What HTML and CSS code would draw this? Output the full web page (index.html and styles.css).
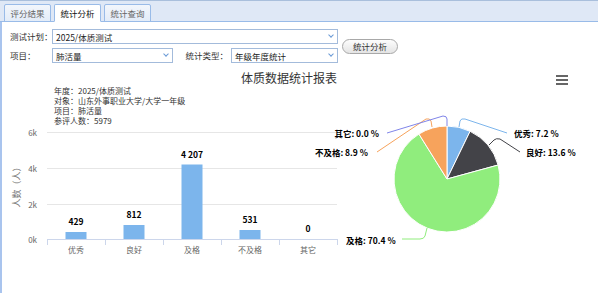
FILE: index.html
```html
<!DOCTYPE html>
<html lang="zh-CN">
<head>
  <meta charset="UTF-8">
  <title>统计分析</title>
  <link rel="stylesheet" href="styles.css">
</head>
<body>
  <div class="tabs">
    <div class="tab">评分结果</div>
    <div class="tab active">统计分析</div>
    <div class="tab">统计查询</div>
  </div>
  <div class="panel">
    <div class="form">
      <div class="label">测试计划：</div>
      <div class="select wide"><span>2025/体质测试</span><i class="arrow"></i></div>
      <button class="btn">统计分析</button>
      <div class="label">项目：</div>
      <div class="select"><span>肺活量</span><i class="arrow"></i></div>
      <div class="label right">统计类型：</div>
      <div class="select"><span>年级年度统计</span><i class="arrow"></i></div>
    </div>

    <svg class="chart" width="596" height="230" viewBox="2 63 596 230">
      <!-- title and menu -->
      <text class="title" x="289" y="83" text-anchor="middle">体质数据统计报表</text>
      <rect x="556" y="75" width="12" height="2" fill="#666"/>
      <rect x="556" y="79" width="12" height="2" fill="#666"/>
      <rect x="556" y="83" width="12" height="2" fill="#666"/>

      <!-- subtitle -->
      <text class="info" x="54" y="94">年度：2025/体质测试</text>
      <text class="info" x="54" y="104">对象：山东外事职业大学/大学一年级</text>
      <text class="info" x="54" y="114">项目：肺活量</text>
      <text class="info" x="54" y="124">参评人数：5979</text>

      <!-- bar chart -->
      <g stroke="#e6e6e6">
        <line x1="47" y1="132.5" x2="337" y2="132.5"/>
        <line x1="47" y1="168.5" x2="337" y2="168.5"/>
        <line x1="47" y1="204.5" x2="337" y2="204.5"/>
      </g>
      <g class="axis" text-anchor="end">
        <text x="37" y="135.5">6k</text>
        <text x="37" y="171.5">4k</text>
        <text x="37" y="207.5">2k</text>
        <text x="37" y="242.5">0k</text>
      </g>
      <text class="axis-title" transform="translate(20 185) rotate(-90)" text-anchor="middle">人数（人）</text>

      <g fill="#7cb5ec">
        <rect x="65.5" y="232" width="21" height="7.5"/>
        <rect x="123.5" y="225" width="21" height="14.5"/>
        <rect x="181.5" y="164.5" width="21" height="75"/>
        <rect x="239.5" y="230" width="21" height="9.5"/>
      </g>
      <g stroke="#ccd6eb">
        <line x1="47" y1="239.5" x2="338" y2="239.5"/>
        <line x1="47.5" y1="239.5" x2="47.5" y2="245"/>
        <line x1="105.5" y1="239.5" x2="105.5" y2="245"/>
        <line x1="163.5" y1="239.5" x2="163.5" y2="245"/>
        <line x1="221.5" y1="239.5" x2="221.5" y2="245"/>
        <line x1="279.5" y1="239.5" x2="279.5" y2="245"/>
        <line x1="337.5" y1="239.5" x2="337.5" y2="245"/>
      </g>
      <g class="value" text-anchor="middle">
        <text x="76" y="225">429</text>
        <text x="134" y="218">812</text>
        <text x="192" y="158">4 207</text>
        <text x="250" y="223">531</text>
        <text x="308" y="232">0</text>
      </g>
      <g class="axis" text-anchor="middle">
        <text x="76" y="253">优秀</text>
        <text x="134" y="253">良好</text>
        <text x="192" y="253">及格</text>
        <text x="250" y="253">不及格</text>
        <text x="308" y="253">其它</text>
      </g>

      <!-- pie chart -->
      <g stroke="#fff" stroke-width="1" stroke-linejoin="round">
        <path fill="#7cb5ec" d="M447,179 L447,126 A53,53 0 0 1 470.09,131.29 Z"/>
        <path fill="#434348" d="M447,179 L470.09,131.29 A53,53 0 0 1 498.13,165.03 Z"/>
        <path fill="#90ed7d" d="M447,179 L498.13,165.03 A53,53 0 1 1 418.94,134.04 Z"/>
        <path fill="#f7a35c" d="M447,179 L418.94,134.04 A53,53 0 0 1 447,126 Z"/>
      </g>
      <g fill="none" stroke-width="1">
        <path stroke="#7cb5ec" d="M459,127 L460,121 Q461,118 465,119 L507,133"/>
        <path stroke="#434348" d="M489,145 L494,140 Q496,138 500,139 L520,152"/>
        <path stroke="#90ed7d" d="M427,228 L425,236 Q424,239 420,239 L402,239"/>
        <path stroke="#f7a35c" d="M432,127 L431,121 Q430,118 426,119 L377,152"/>
        <path stroke="#8085e9" d="M447,126 L447,119 Q447,116 443,116 L387,133"/>
      </g>
      <g class="value">
        <text x="514" y="137">优秀: 7.2 %</text>
        <text x="526" y="156">良好: 13.6 %</text>
        <text x="379" y="137" text-anchor="end">其它: 0.0 %</text>
        <text x="368" y="156" text-anchor="end">不及格: 8.9 %</text>
        <text x="346" y="244">及格: 70.4 %</text>
      </g>
    </svg>
  </div>
</body>
</html>
```

FILE: styles.css
```css
* { box-sizing: border-box; }
html, body {
  margin: 0;
  height: 100%;
  overflow: hidden;
}
body {
  font-family: "Noto Sans CJK SC", "Liberation Sans", sans-serif;
  font-size: 8.5px;
  color: #222;
  background: #fff;
}

.tabs {
  display: flex;
  align-items: flex-end;
  gap: 3px;
  height: 22px;
  padding-left: 4px;
  background: #dfe8f6;
  border-top: 1px solid #a9bfdc;
  border-bottom: 1px solid #99bbe8;
}
.tab {
  width: 47px;
  height: 18px;
  margin-bottom: -1px;
  line-height: 16px;
  text-align: center;
  color: #666;
  background: linear-gradient(#f2f6fc, #e3ecf8);
  border: 1px solid #99bbe8;
  border-radius: 2px 2px 0 0;
}
.tab.active {
  color: #111;
  background: #fff;
  border-bottom-color: #fff;
}

.panel {
  height: calc(100% - 22px);
  border-left: 2px solid #a9c4ee;
}

.form {
  display: grid;
  grid-template-columns: 42px 121px 58px 107px auto;
  grid-template-rows: 15px 15px;
  row-gap: 4px;
  padding: 7px 0 0 8px;
  justify-content: start;
}
.label {
  line-height: 15px;
  color: #333;
  white-space: nowrap;
}
.label.right {
  text-align: right;
  padding-right: 3px;
}
.select {
  display: flex;
  align-items: center;
  justify-content: space-between;
  border: 1px solid #a3bbdb;
  background: #fff;
  padding-left: 3px;
  color: #222;
  white-space: nowrap;
}
.select.wide { grid-column: 2 / 5; }
.select .arrow {
  width: 4px;
  height: 4px;
  margin: 0 4px 3px 0;
  border-right: 1.5px solid #6a9ad6;
  border-bottom: 1.5px solid #6a9ad6;
  transform: rotate(45deg);
}
.btn {
  grid-column: 5;
  grid-row: 1 / 3;
  align-self: center;
  width: 56px;
  height: 15px;
  margin-left: 4px;
  padding: 0;
  font: inherit;
  color: #333;
  background: linear-gradient(#fdfdfd, #e4e4e4);
  border: 1px solid #a8a8a8;
  border-radius: 8px;
}

.chart {
  display: block;
}
.chart text {
  font-family: "Noto Sans CJK SC", "Liberation Sans", sans-serif;
}
.title {
  font-size: 12px;
  fill: #333;
}
.info {
  font-size: 8px;
  fill: #333;
}
.axis {
  font-size: 8px;
  fill: #666;
}
.axis-title {
  font-size: 9px;
  fill: #777;
}
.value {
  font-size: 8.5px;
  font-weight: bold;
  fill: #000;
}
```
